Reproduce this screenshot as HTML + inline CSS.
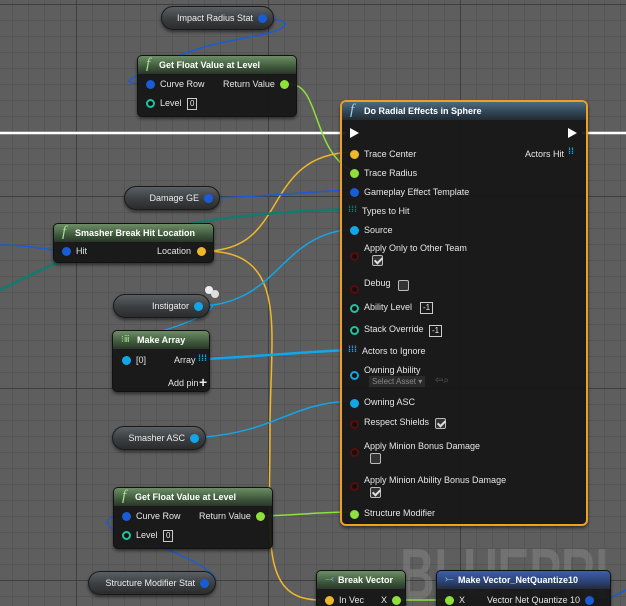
<!DOCTYPE html>
<html style="width:626px;height:606px;overflow:hidden"><head><meta charset="utf-8"><style>
*{box-sizing:border-box;margin:0;padding:0}
body{width:626px;height:606px;overflow:hidden;position:relative;font-family:"Liberation Sans",sans-serif;font-size:9px;color:#e6e6e6;
background-color:#5e5e5e;
background-image:
linear-gradient(90deg,#3f3f3f 0 1px,transparent 1px),
linear-gradient(0deg,#3f3f3f 0 1px,transparent 1px),
linear-gradient(90deg,#555 0 1px,transparent 1px),
linear-gradient(0deg,#555 0 1px,transparent 1px);
background-size:192px 192px,192px 192px,16px 16px,16px 16px;
background-position:76px 0,0 5px,12px 0,0 5px;}
.n{position:absolute;background:rgba(20,21,20,.93);border-radius:5px;box-shadow:0 2px 3px rgba(0,0,0,.5);border:1px solid #111}
.h{height:18px;border-radius:4px 4px 0 0;background:linear-gradient(180deg,#6d8d66,#3f5a3c 60%,#2a3529);font-weight:bold;font-size:9px;padding:4px 0 0 21px;position:relative;color:#fff}
.h i{position:absolute;left:8px;top:0;font-style:italic;font-family:"Liberation Serif",serif;font-size:15px;color:#a8e08a;font-weight:normal}
.t{position:absolute;white-space:nowrap}
.p{position:absolute;width:9px;height:9px;border-radius:50%}
.o{position:absolute;width:9px;height:9px;border-radius:50%;border:2px solid;background:#111}
.pill{position:absolute;height:24px;border-radius:12px;background:linear-gradient(180deg,#5a5f63,#3b3e40 55%,#2a2c2d);border:1px solid #1a1a1a;box-shadow:0 2px 3px rgba(0,0,0,.5);color:#eee;text-align:right;padding:6px 20px 0 0}
.pill .p{right:6px;top:7px}
.box{position:absolute;border:1px solid #ccc;font-size:8px;padding:0 2px;height:12px;line-height:10px}
.cb{position:absolute;width:11px;height:11px;border:1px solid #bbb;border-radius:2px;background:#333}
.cb.k::after{content:"";position:absolute;left:3px;top:0;width:3px;height:6px;border:solid #ddd;border-width:0 2px 2px 0;transform:rotate(45deg)}
</style></head><body>
<svg width="626" height="606" style="position:absolute;left:0;top:0" fill="none">
<line x1="0" y1="133" x2="345" y2="133" stroke="#fff" stroke-width="2.5"/>
<line x1="582" y1="133" x2="626" y2="133" stroke="#fff" stroke-width="2.5"/>
<path d="M262 18 C300 20 285 30 260 35 C220 42 180 50 140 75 C120 82 130 84 150 84" stroke="#1a5bd6" stroke-width="1.5"/>
<path d="M290 84 C320 85 312 150 352 171" stroke="#8fe03a" stroke-width="1.5"/>
<path d="M205 251 C290 251 260 155 352 152" stroke="#f0b72a" stroke-width="1.5"/>
<path d="M205 251 C290 251 270 330 270 430 C270 540 260 600 320 600" stroke="#f0b72a" stroke-width="1.5"/>
<path d="M212 198 C280 196 300 192 352 190" stroke="#1a5bd6" stroke-width="1.5"/>
<path d="M0 290 C80 250 150 215 352 209" stroke="#137a6c" stroke-width="2.5"/>
<path d="M0 245 C30 245 50 250 60 251" stroke="#1a5bd6" stroke-width="1.5"/>
<path d="M205 306 C220 300 215 315 165 330 C90 350 120 359 128 359" stroke="#12a6e8" stroke-width="1.3"/>
<path d="M205 306 C280 300 280 235 352 229" stroke="#12a6e8" stroke-width="1.5"/>
<path d="M205 359 C280 355 300 352 352 350" stroke="#12a6e8" stroke-width="2.5"/>
<path d="M205 437 C280 430 290 403 352 401" stroke="#12a6e8" stroke-width="1.5"/>
<path d="M262 516 C300 515 320 512 352 512" stroke="#8fe03a" stroke-width="1.5"/>
<path d="M122 516 C100 516 100 530 140 540 C190 555 230 580 210 583" stroke="#1a5bd6" stroke-width="1.3"/>
<path d="M400 600 L465 600" stroke="#8fe03a" stroke-width="1.5"/>
<path d="M595 600 C610 600 615 595 626 590" stroke="#1a5bd6" stroke-width="1.5"/>
</svg>

<div class="t" style="left:400px;top:539px;font-size:72px;line-height:1;font-weight:bold;color:rgba(255,255,255,.13);transform:scaleX(.66);transform-origin:0 0">BLUEPRI</div>

<div class="pill" style="left:161px;top:6px;width:113px">Impact Radius Stat<span class="p" style="background:#1a5bd6"></span></div>

<div class="n" style="left:137px;top:55px;width:160px;height:62px"><div class="h"><i>f</i>Get Float Value at Level</div>
<span class="p" style="left:8px;top:24px;background:#1a5bd6"></span><span class="t" style="left:22px;top:23px">Curve Row</span>
<span class="t" style="left:85px;top:23px">Return Value</span><span class="p" style="left:142px;top:24px;background:#8fe03a"></span>
<span class="o" style="left:8px;top:43px;border-color:#1ec3a0"></span><span class="t" style="left:22px;top:42px">Level</span><span class="box" style="left:49px;top:42px">0</span></div>

<div class="pill" style="left:124px;top:186px;width:96px">Damage GE<span class="p" style="background:#1a5bd6"></span></div>

<div class="n" style="left:53px;top:223px;width:161px;height:40px"><div class="h"><i>f</i>Smasher Break Hit Location</div>
<span class="p" style="left:8px;top:23px;background:#1a5bd6"></span><span class="t" style="left:22px;top:22px">Hit</span>
<span class="t" style="left:103px;top:22px">Location</span><span class="p" style="left:143px;top:23px;background:#f0b72a"></span></div>

<div class="p" style="left:205px;top:286px;width:8px;height:8px;background:#eee"></div><div class="p" style="left:211px;top:290px;width:8px;height:8px;background:#ddd"></div>
<div class="pill" style="left:113px;top:294px;width:97px">Instigator<span class="p" style="background:#12a6e8"></span></div>

<div class="n" style="left:112px;top:330px;width:98px;height:62px"><div class="h" style="padding-left:24px"><i style="font-style:normal;font-size:9px;top:3px;font-family:'Liberation Sans'">⁝ⅲ</i>Make Array</div>
<span class="p" style="left:9px;top:25px;background:#12a6e8"></span><span class="t" style="left:23px;top:24px">[0]</span>
<span class="t" style="left:61px;top:24px">Array</span><span class="t" style="left:85px;top:22px;color:#12a6e8;font-weight:bold">⁞⁞⁞</span>
<span class="t" style="left:55px;top:47px">Add pin</span><span class="t" style="left:86px;top:43px;font-size:14px;font-weight:bold">+</span></div>

<div class="pill" style="left:112px;top:426px;width:94px">Smasher ASC<span class="p" style="background:#12a6e8"></span></div>

<div class="n" style="left:113px;top:487px;width:160px;height:62px"><div class="h"><i>f</i>Get Float Value at Level</div>
<span class="p" style="left:8px;top:24px;background:#1a5bd6"></span><span class="t" style="left:22px;top:23px">Curve Row</span>
<span class="t" style="left:85px;top:23px">Return Value</span><span class="p" style="left:142px;top:24px;background:#8fe03a"></span>
<span class="o" style="left:8px;top:43px;border-color:#1ec3a0"></span><span class="t" style="left:22px;top:42px">Level</span><span class="box" style="left:49px;top:42px">0</span></div>

<div class="pill" style="left:88px;top:571px;width:128px">Structure Modifier Stat<span class="p" style="background:#1a5bd6"></span></div>

<div class="n" style="left:340px;top:100px;width:248px;height:426px;border:2px solid #f0a020;border-radius:6px">
<div class="h" style="background:linear-gradient(180deg,#4d6a80,#2e4352 60%,#222b31);padding-left:22px"><i style="color:#9ad0f0">f</i>Do Radial Effects in Sphere</div>
<span class="t" style="left:8px;top:26px;width:0;height:0;border-left:9px solid #fff;border-top:5px solid transparent;border-bottom:5px solid transparent"></span>
<span class="t" style="left:226px;top:26px;width:0;height:0;border-left:9px solid #fff;border-top:5px solid transparent;border-bottom:5px solid transparent"></span>
<span class="p" style="left:8px;top:48px;background:#f0b72a"></span><span class="t" style="left:22px;top:47px">Trace Center</span>
<span class="t" style="left:183px;top:47px">Actors Hit</span><span class="t" style="left:226px;top:44px;color:#12a6e8;font-weight:bold">⁞⁞</span>
<span class="p" style="left:8px;top:67px;background:#8fe03a"></span><span class="t" style="left:22px;top:66px">Trace Radius</span>
<span class="p" style="left:8px;top:86px;background:#1a5bd6"></span><span class="t" style="left:22px;top:85px">Gameplay Effect Template</span>
<span class="t" style="left:6px;top:102px;color:#137a6c;font-weight:bold">⁞⁞⁞</span><span class="t" style="left:20px;top:104px">Types to Hit</span>
<span class="p" style="left:8px;top:124px;background:#12a6e8"></span><span class="t" style="left:22px;top:123px">Source</span>
<span class="o" style="left:8px;top:150px;border-color:#5a0c0c"></span><span class="t" style="left:22px;top:141px">Apply Only to Other Team</span><span class="cb k" style="left:30px;top:153px"></span>
<span class="o" style="left:8px;top:183px;border-color:#5a0c0c"></span><span class="t" style="left:22px;top:176px">Debug</span><span class="cb" style="left:56px;top:178px"></span>
<span class="o" style="left:8px;top:202px;border-color:#1ec3a0"></span><span class="t" style="left:22px;top:200px">Ability Level</span><span class="box" style="left:78px;top:200px">-1</span>
<span class="o" style="left:8px;top:224px;border-color:#1ec3a0"></span><span class="t" style="left:22px;top:222px">Stack Override</span><span class="box" style="left:87px;top:223px">-1</span>
<span class="t" style="left:6px;top:242px;color:#12a6e8;font-weight:bold">⁞⁞⁞</span><span class="t" style="left:20px;top:244px">Actors to Ignore</span>
<span class="o" style="left:8px;top:269px;border-color:#12a6e8"></span><span class="t" style="left:22px;top:263px">Owning Ability</span>
<span class="t" style="left:27px;top:274px;background:#2a2a2a;color:#888;font-size:8px;padding:1px 3px">Select Asset ▾</span><span class="t" style="left:93px;top:273px;color:#555;font-size:10px">⇦⌕</span>
<span class="p" style="left:8px;top:297px;background:#12a6e8"></span><span class="t" style="left:22px;top:295px">Owning ASC</span>
<span class="o" style="left:8px;top:318px;border-color:#5a0c0c"></span><span class="t" style="left:22px;top:315px">Respect Shields</span><span class="cb k" style="left:93px;top:316px"></span>
<span class="o" style="left:8px;top:346px;border-color:#5a0c0c"></span><span class="t" style="left:22px;top:339px">Apply Minion Bonus Damage</span><span class="cb" style="left:28px;top:351px"></span>
<span class="o" style="left:8px;top:380px;border-color:#5a0c0c"></span><span class="t" style="left:22px;top:373px">Apply Minion Ability Bonus Damage</span><span class="cb k" style="left:28px;top:385px"></span>
<span class="p" style="left:8px;top:408px;background:#8fe03a"></span><span class="t" style="left:22px;top:406px">Structure Modifier</span>
</div>

<div class="n" style="left:316px;top:570px;width:90px;height:40px"><div class="h"><i style="font-style:normal;font-size:11px;color:#7ab0f0;top:2px">⤙</i>Break Vector</div>
<span class="p" style="left:8px;top:25px;background:#f0b72a"></span><span class="t" style="left:22px;top:24px">In Vec</span>
<span class="t" style="left:64px;top:24px">X</span><span class="p" style="left:75px;top:25px;background:#8fe03a"></span></div>

<div class="n" style="left:436px;top:570px;width:175px;height:40px"><div class="h" style="background:linear-gradient(180deg,#3d5ea8,#2b4277 60%,#222b3a)"><i style="font-style:normal;font-size:11px;color:#9cc;top:2px">⤚</i>Make Vector_NetQuantize10</div>
<span class="p" style="left:8px;top:25px;background:#8fe03a"></span><span class="t" style="left:22px;top:24px">X</span>
<span class="t" style="left:50px;top:24px">Vector Net Quantize 10</span><span class="p" style="left:148px;top:25px;background:#1a5bd6"></span></div>
</body></html>
